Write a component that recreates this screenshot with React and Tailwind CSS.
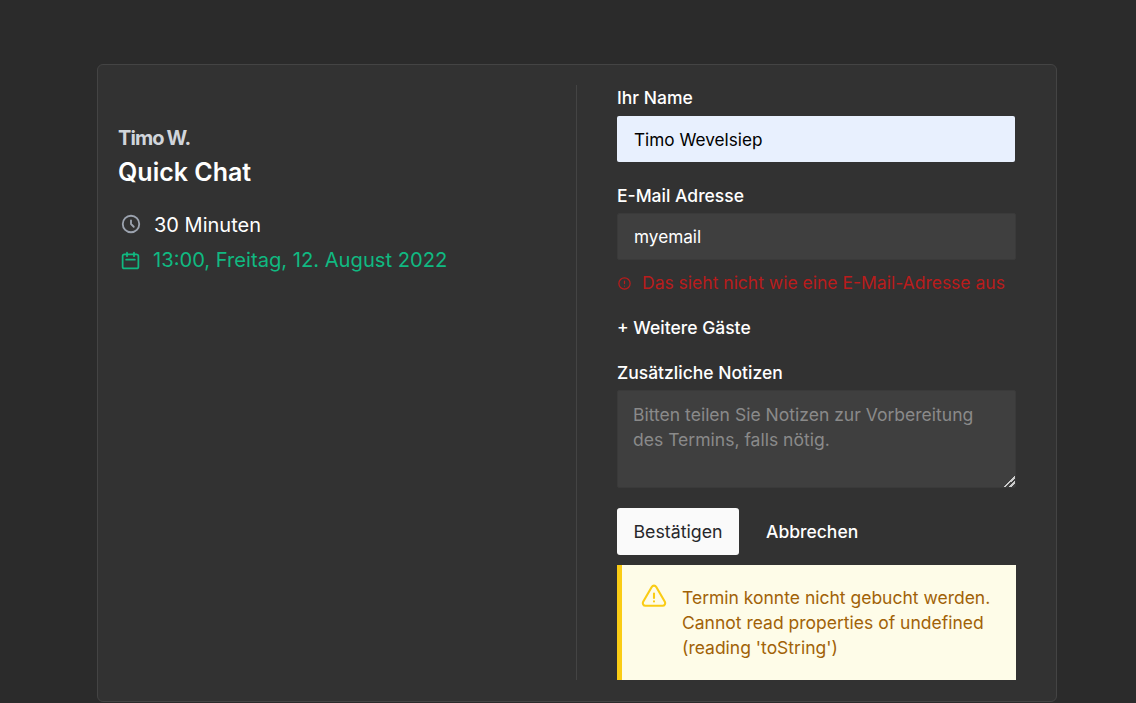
import React from "react";

const Icon = ({ className, d, strokeWidth = 2 }) => (
  <svg className={className} viewBox="0 0 24 24" fill="none" stroke="currentColor" strokeWidth={strokeWidth} strokeLinecap="round" strokeLinejoin="round">
    <path d={d} />
  </svg>
);

export default function App() {
  return (
    <div className="h-[703px] overflow-hidden bg-[#2b2b2b] font-['Inter',sans-serif] pt-16">
      <div className="ml-[97px] flex h-[638px] w-[960px] rounded-md border border-[#444444] bg-[#323232] pt-5 pb-[21px] pl-5">
        <div className="w-[459px] shrink-0 border-r border-[#444444] pt-[41px]">
          <div className="text-[20px] leading-6 font-bold tracking-[-0.045em] text-[#d1d5db] [word-spacing:-1px]">Timo W.</div>
          <h2 className="mt-[6px] text-[25px] leading-8 font-semibold text-white">Quick Chat</h2>
          <div className="mt-[25px] flex h-6 items-center text-[20px] text-white">
            <Icon className="ml-[2px] mr-[11px] h-[22px] w-[22px] shrink-0 -translate-y-[1px] text-[#9ca3af]" d="M12 8v4l3 3m6-3a9 9 0 11-18 0 9 9 0 0118 0z" />
            <span className="ml-[1px]">30 Minuten</span>
          </div>
          <div className="mt-[11px] flex h-6 items-center text-[20.15px] text-[#10b981]">
            <Icon className="ml-[2px] mr-[12px] h-[21px] w-[21px] shrink-0 text-[#10b981]" d="M8 7V3m8 4V3m-9 8h10M5 21h14a2 2 0 002-2V7a2 2 0 00-2-2H5a2 2 0 00-2 2v12a2 2 0 002 2z" />
            <span>13:00, Freitag, 12. August 2022</span>
          </div>
        </div>
        <div className="ml-10 w-[399px] shrink-0">
          <label className="block pt-[1px] text-[17.5px] leading-6 font-medium text-white">Ihr Name</label>
          <input
            readOnly
            value="Timo Wevelsiep"
            className="mt-[6px] block h-[46px] w-[398px] rounded-[2px] bg-[#e8f0fe] pr-4 pl-[17px] text-[17.2px] text-black outline-none"
          />
          <label className="mt-[22px] block text-[17.5px] leading-6 font-medium text-white">E-Mail Adresse</label>
          <input
            readOnly
            value="myemail"
            className="mt-[5px] block h-[47px] w-[399px] rounded-[2px] border border-[#3a3a3a] bg-[#3f3f3f] px-4 text-[17.2px] text-white outline-none"
          />
          <div className="mt-[11px] flex h-6 items-center text-[17.5px] text-[#b91c1c]">
            <Icon className="mr-[10px] h-[15px] w-[15px] shrink-0" d="M12 8v4m0 4h.01M21 12a9 9 0 11-18 0 9 9 0 0118 0z" />
            <span>Das sieht nicht wie eine E-Mail-Adresse aus</span>
          </div>
          <div className="mt-[21px] text-[17.5px] leading-6 font-medium text-white">+ Weitere Gäste</div>
          <label className="mt-[21px] block text-[17.5px] leading-6 font-medium text-white">Zusätzliche Notizen</label>
          <textarea
            readOnly
            placeholder="Bitten teilen Sie Notizen zur Vorbereitung des Termins, falls nötig."
            className="mt-[5px] block h-[98px] w-[399px] rounded-[2px] border border-[#3a3a3a] bg-[#3f3f3f] py-[11px] pr-4 pl-[15px] text-[17.55px] leading-[25px] text-white outline-none placeholder:text-[#8a8a8a] [&::-webkit-resizer]:bg-[linear-gradient(135deg,transparent_62%,#cccccc_62%,#cccccc_70%,transparent_70%,transparent_78%,#cccccc_78%,#cccccc_88%,transparent_88%)]"
          />
          <div className="mt-5 flex items-center">
            <button className="h-[47px] w-[122px] rounded-[3px] bg-[#fafafa] pt-[2px] text-[17.8px] text-[#27272a]">Bestätigen</button>
            <button className="ml-[27px] pt-[2px] text-[17.5px] font-medium text-white">Abbrechen</button>
          </div>
          <div className="mt-[10px] flex h-[115px] border-l-[5px] border-[#facc15] bg-[#fefce8] pl-[18px] pt-[20px]">
            <Icon className="-mt-[2px] h-[28px] w-[28px] shrink-0 text-[#facc15]" strokeWidth={1.8} d="M12 9v3.75m-9.303 3.376c-.866 1.5.217 3.374 1.948 3.374h14.71c1.73 0 2.813-1.874 1.948-3.374L13.949 3.378c-.866-1.5-3.032-1.5-3.898 0L2.697 16.126zM12 15.75h.007v.008H12v-.008z" />
            <div className="ml-[14px] text-[17.5px] leading-[25px] text-[#a16207]">
              Termin konnte nicht gebucht werden.
              <br />
              Cannot read properties of undefined
              <br />
              (reading 'toString')
            </div>
          </div>
        </div>
      </div>
    </div>
  );
}
